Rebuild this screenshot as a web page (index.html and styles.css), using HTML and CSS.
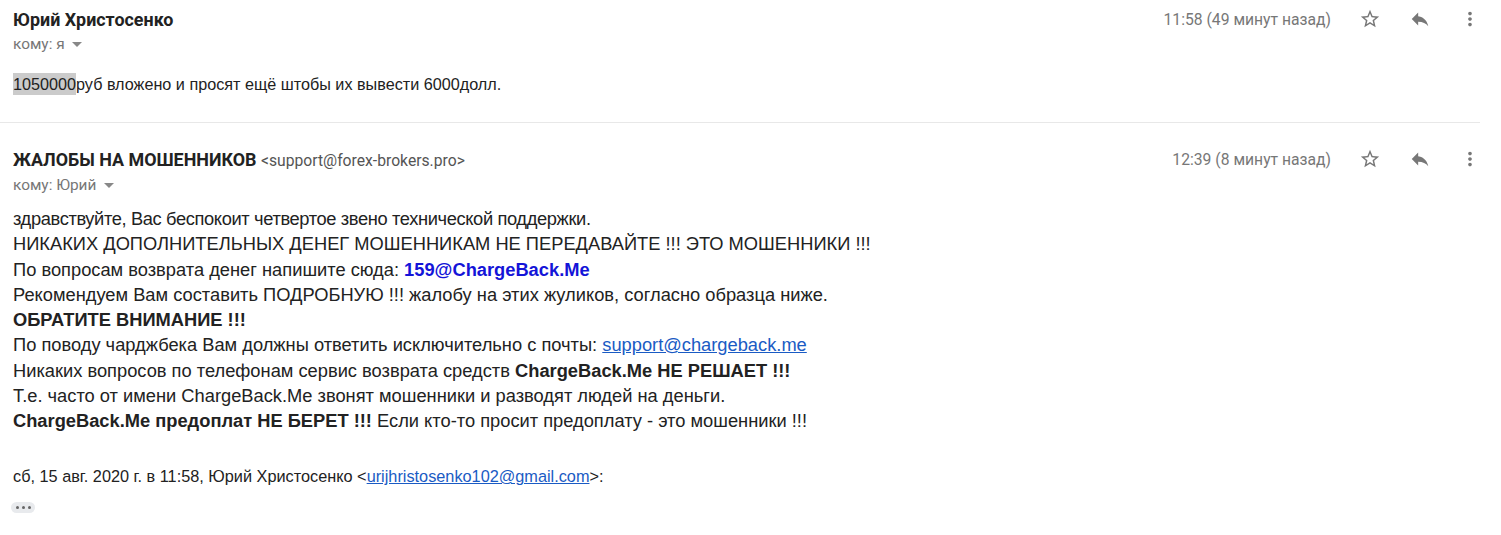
FILE: index.html
```html
<!doctype html>
<html>

<head>
  <title>Переписка</title>
  <link rel="stylesheet" href="styles.css">
</head>

<body>
  <div class="thread">
    <div class="message">
      <div class="header">
        <div class="sender">
          <div class="name">Юрий Христосенко</div>
          <div class="to">кому: я <span class="caret"></span></div>
        </div>
        <div class="meta">
          <span class="time">11:58 (49 минут назад)</span>
          <span class="icon"><svg viewBox="0 0 24 24"><path d="M22 9.24l-7.19-.62L12 2 9.19 8.63 2 9.24l5.46 4.73L5.82 21 12 17.27 18.18 21l-1.63-7.03L22 9.24zM12 15.4l-3.76 2.27 1-4.28-3.32-2.88 4.38-.38L12 6.1l1.71 4.04 4.38.38-3.32 2.88 1 4.28L12 15.4z"/></svg></span>
          <span class="icon"><svg viewBox="0 0 24 24"><path d="M10 9V5l-7 7 7 7v-4.1c5 0 8.5 1.6 11 5.1-1-5-4-10-11-11z"/></svg></span>
          <span class="icon"><svg viewBox="0 0 24 24"><path d="M12 8c1.1 0 2-.9 2-2s-.9-2-2-2-2 .9-2 2 .9 2 2 2zm0 2c-1.1 0-2 .9-2 2s.9 2 2 2 2-.9 2-2-.9-2-2-2zm0 6c-1.1 0-2 .9-2 2s.9 2 2 2 2-.9 2-2-.9-2-2-2z"/></svg></span>
        </div>
      </div>
      <div class="body small">
        <span class="mark">1050000</span>руб вложено и просят ещё штобы их вывести 6000долл.
      </div>
    </div>

    <div class="divider"></div>

    <div class="message">
      <div class="header">
        <div class="sender">
          <div class="name">ЖАЛОБЫ НА МОШЕННИКОВ <span class="address">&lt;support@forex-brokers.pro&gt;</span></div>
          <div class="to">кому: Юрий <span class="caret"></span></div>
        </div>
        <div class="meta">
          <span class="time">12:39 (8 минут назад)</span>
          <span class="icon"><svg viewBox="0 0 24 24"><path d="M22 9.24l-7.19-.62L12 2 9.19 8.63 2 9.24l5.46 4.73L5.82 21 12 17.27 18.18 21l-1.63-7.03L22 9.24zM12 15.4l-3.76 2.27 1-4.28-3.32-2.88 4.38-.38L12 6.1l1.71 4.04 4.38.38-3.32 2.88 1 4.28L12 15.4z"/></svg></span>
          <span class="icon"><svg viewBox="0 0 24 24"><path d="M10 9V5l-7 7 7 7v-4.1c5 0 8.5 1.6 11 5.1-1-5-4-10-11-11z"/></svg></span>
          <span class="icon"><svg viewBox="0 0 24 24"><path d="M12 8c1.1 0 2-.9 2-2s-.9-2-2-2-2 .9-2 2 .9 2 2 2zm0 2c-1.1 0-2 .9-2 2s.9 2 2 2 2-.9 2-2-.9-2-2-2zm0 6c-1.1 0-2 .9-2 2s.9 2 2 2 2-.9 2-2-.9-2-2-2z"/></svg></span>
        </div>
      </div>
      <div class="body large">
        <div class="greeting">здравствуйте, Вас беспокоит четвертое звено технической поддержки.</div>
        <div>НИКАКИХ ДОПОЛНИТЕЛЬНЫХ ДЕНЕГ МОШЕННИКАМ НЕ ПЕРЕДАВАЙТЕ !!! ЭТО МОШЕННИКИ !!!</div>
        <div>По вопросам возврата денег напишите сюда: <b class="blue">159@ChargeBack.Me</b></div>
        <div>Рекомендуем Вам составить ПОДРОБНУЮ !!! жалобу на этих жуликов, согласно образца ниже.</div>
        <div><b>ОБРАТИТЕ ВНИМАНИЕ !!!</b></div>
        <div>По поводу чарджбека Вам должны ответить исключительно с почты: <a href="#">support@chargeback.me</a></div>
        <div>Никаких вопросов по телефонам сервис возврата средств <b>ChargeBack.Me НЕ РЕШАЕТ !!!</b></div>
        <div>Т.е. часто от имени ChargeBack.Me звонят мошенники и разводят людей на деньги.</div>
        <div><b>ChargeBack.Me предоплат НЕ БЕРЕТ !!!</b> Если кто-то просит предоплату - это мошенники !!!</div>
      </div>
      <div class="quote">сб, 15 авг. 2020 г. в 11:58, Юрий Христосенко &lt;<a href="#">urijhristosenko102@gmail.com</a>&gt;:</div>
      <div class="more"><span></span><span></span><span></span></div>
    </div>
  </div>
</body>

</html>
```

FILE: styles.css
```css
html {
  font-family: Roboto, "Liberation Sans", sans-serif;
}

body {
  margin: 0;
  background: #fff;
  color: #222;
}

.thread {
  width: 1495px;
}

.message {
  padding-left: 13px;
}

.header {
  display: flex;
  justify-content: space-between;
  align-items: flex-start;
}

.sender {
  padding-top: 9px;
}

.name {
  font-size: 17.9px;
  font-weight: bold;
  line-height: 22px;
  color: #222;
}

.address {
  font-size: 15.7px;
  font-weight: normal;
  color: #555;
}

.to {
  font-size: 15.4px;
  color: #777;
  line-height: 20px;
  margin-top: 3px;
}

.caret {
  display: inline-block;
  margin-left: 4px;
  vertical-align: middle;
  border-left: 5px solid transparent;
  border-right: 5px solid transparent;
  border-top: 5px solid #888;
}

.meta {
  display: flex;
  align-items: center;
  padding-top: 8px;
}

.time {
  font-size: 15.7px;
  color: #777;
  margin-right: 14px;
}

.icon {
  width: 50px;
  height: 22px;
  display: flex;
  justify-content: center;
}

.icon svg {
  width: 22px;
  height: 22px;
  fill: #777;
}

.body {
  font-family: Arial, "Liberation Sans", sans-serif;
  color: #222;
}

.body.small {
  font-size: 16.2px;
  line-height: 22px;
  margin-top: 19px;
}

.mark {
  background: #cbcbcb;
  padding: 2px 0;
}

.divider {
  width: 1480px;
  height: 1px;
  background: #e8e8e8;
  margin: 27px 0 17px;
}

.body.large {
  font-size: 18.3px;
  line-height: 25.25px;
  margin-top: 11px;
}

.greeting {
  letter-spacing: -0.37px;
}

.blue {
  color: #1414d8;
}

a {
  color: #1a5bc4;
}

.quote {
  font-family: Arial, "Liberation Sans", sans-serif;
  font-size: 16.3px;
  line-height: 20px;
  margin-top: 33px;
  color: #222;
}

.more {
  display: flex;
  gap: 3px;
  align-items: center;
  justify-content: center;
  width: 24px;
  height: 11px;
  margin: 16px 0 0 -2px;
  border-radius: 6px;
  background: #e8eaed;
}

.more span {
  width: 3px;
  height: 3px;
  border-radius: 50%;
  background: #666;
}
```
